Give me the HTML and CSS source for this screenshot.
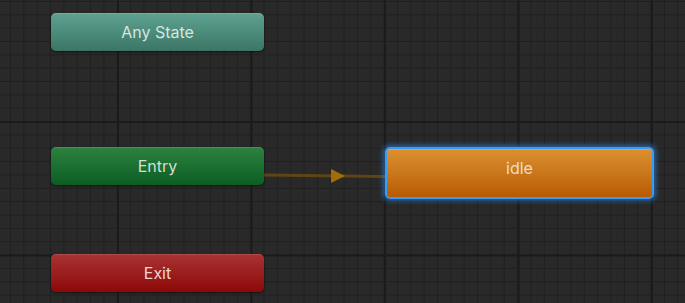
FILE: index.html
```html
<!DOCTYPE html>
<html>
<head>
<meta charset="utf-8">
<link rel="stylesheet" href="styles.css">
</head>
<body>
<div class="canvas">
  <svg class="edges" width="685" height="303" viewBox="0 0 685 303">
    <line x1="264" y1="175" x2="386" y2="176.5" class="edge-line"/>
    <polygon points="331,169 345,176 331,183" class="edge-head"/>
  </svg>
  <div class="node node-any">Any State</div>
  <div class="node node-entry">Entry</div>
  <div class="node node-exit">Exit</div>
  <div class="node node-idle">idle</div>
</div>
</body>
</html>
```
FILE: styles.css
```css
html, body {
  margin: 0;
  padding: 0;
  background: #282828;
}
.canvas {
  position: relative;
  width: 685px;
  height: 303px;
  overflow: hidden;
  background-color: #292929;
  background-image:
    linear-gradient(to right, #1b1b1b 0, #1b1b1b 2px, transparent 2px),
    linear-gradient(to bottom, #1b1b1b 0, #1b1b1b 2px, transparent 2px),
    linear-gradient(to right, #1f1f1f 0, #1f1f1f 1px, transparent 1px),
    linear-gradient(to bottom, #1f1f1f 0, #1f1f1f 1px, transparent 1px);
  background-size: 133.5px 133.5px, 133.5px 133.5px, 13.35px 13.35px, 13.35px 13.35px;
  background-position: 117px 0, 0 121px, 10px 0, 0 1px;
  font-family: Inter, "Noto Sans", sans-serif;
}
.edges {
  position: absolute;
  left: 0;
  top: 0;
}
.edge-line {
  stroke: #5e4516;
  stroke-width: 3;
}
.edge-head {
  fill: #a26d06;
}
.node {
  position: absolute;
  display: flex;
  align-items: center;
  justify-content: center;
  box-sizing: border-box;
  border-radius: 5px;
  color: #d6d6d6;
  font-size: 16px;
  box-shadow: 0 1px 2px rgba(0, 0, 0, 0.5), inset 0 1px 0 rgba(255, 255, 255, 0.12);
}
.node-any {
  left: 51px;
  top: 13px;
  width: 213px;
  height: 38px;
  background: linear-gradient(to bottom, #5fa291 0%, #4a8a79 55%, #3c7566 100%);
  color: #d9e4e0;
}
.node-entry {
  left: 51px;
  top: 147px;
  width: 213px;
  height: 38px;
  background: linear-gradient(to bottom, #2c8240 0%, #1a6e30 55%, #0d5d23 100%);
  color: #d2dfd4;
}
.node-exit {
  left: 51px;
  top: 254px;
  width: 213px;
  height: 38px;
  background: linear-gradient(to bottom, #a83333 0%, #9a1c1c 55%, #8c0808 100%);
  color: #ead6d6;
}
.node-idle {
  left: 385px;
  top: 147px;
  width: 269px;
  height: 52px;
  border: 2px solid #3a9bf2;
  background: linear-gradient(to bottom, #db902e 0%, #c9741a 55%, #b85a02 100%);
  color: #f0dcc6;
  box-shadow: 0 0 5px 2px rgba(40, 140, 240, 0.6), inset 0 1px 0 rgba(255, 255, 255, 0.15);
  padding-bottom: 10px;
}
```
